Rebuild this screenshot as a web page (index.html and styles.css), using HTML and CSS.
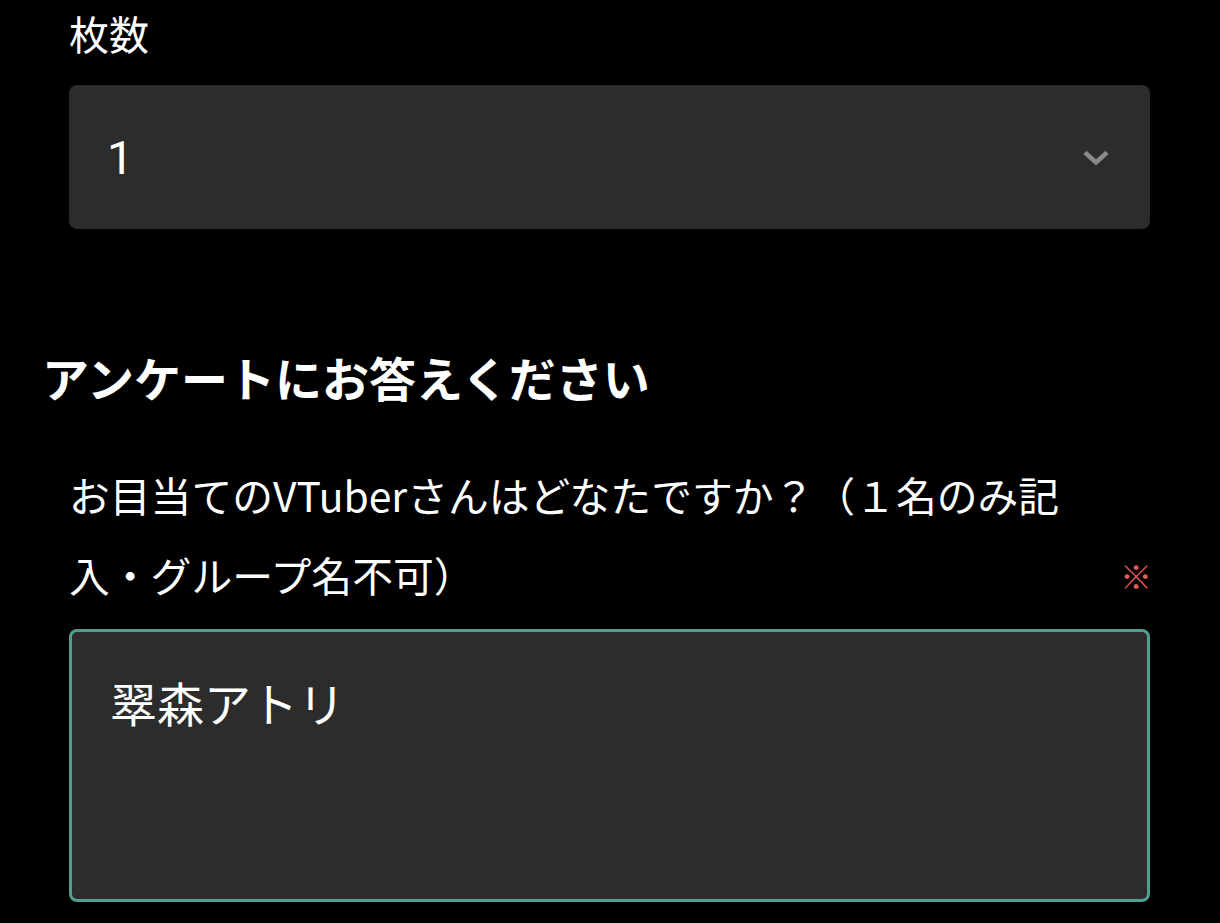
FILE: index.html
```html
<!DOCTYPE html>
<html lang="ja">
<head>
  <meta charset="UTF-8">
  <title>アンケート</title>
  <link rel="stylesheet" href="styles.css">
</head>
<body>
  <div class="form">
    <!-- 枚数 -->
    <div class="field">
      <label class="field-label">枚数</label>
      <div class="select-box">
        <span class="select-value">1</span>
        <svg class="chevron" width="28" height="18" viewBox="0 0 28 18">
          <path d="M3 3.5 L14 13.5 L25 3.5" fill="none" stroke="#898989" stroke-width="4.5"/>
        </svg>
      </div>
    </div>

    <h2 class="section-title">アンケートにお答えください</h2>

    <div class="field">
      <div class="question">
        <span class="question-text">お目当てのVTuberさんはどなたですか？（１名のみ記入・グループ名不可）</span>
        <span class="required">※</span>
      </div>
      <div class="textarea-box">翠森アトリ</div>
    </div>
  </div>
</body>
</html>
```

FILE: styles.css
```css
body {
  margin: 0;
  background: #000;
  color: #fff;
  font-family: "Noto Sans CJK JP", "Noto Sans", sans-serif;
}
.form {
  padding: 8px 70px 0 45px;
}
.field {
  padding-left: 24px;
}
.field-label {
  display: block;
  font-size: 40px;
  line-height: 50px;
  margin-bottom: 27px;
}
.select-box {
  height: 144px;
  background: #2c2c2c;
  border-radius: 8px;
  display: flex;
  align-items: center;
  justify-content: space-between;
  padding: 0 40px 0 38px;
}
.select-value {
  font-family: Roboto, sans-serif;
  font-size: 47px;
}
.chevron {
  margin-top: 2px;
}
.section-title {
  margin: 118px 0 48px -3px;
  font-size: 47px;
  line-height: 60px;
  font-weight: 700;
}
.question {
  display: flex;
  align-items: flex-end;
  justify-content: space-between;
  margin-bottom: 14px;
}
.question-text {
  width: 1035px;
  font-size: 40.8px;
  line-height: 80px;
}
.required {
  color: #e05a5a;
  font-size: 32px;
  font-weight: 700;
  line-height: 80px;
  margin-right: -2px;
}
.textarea-box {
  border: 3px solid #4f9e94;
  border-radius: 8px;
  background: #2c2c2c;
  padding: 38px 38px;
  font-size: 47px;
  line-height: 64px;
  box-sizing: border-box;
  height: 273px;
}
```
